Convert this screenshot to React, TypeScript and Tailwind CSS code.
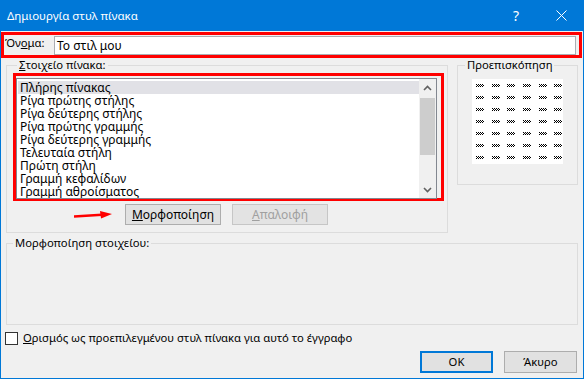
import React from "react";

const items = [
  "Πλήρης πίνακας",
  "Ρίγα πρώτης στήλης",
  "Ρίγα δεύτερης στήλης",
  "Ρίγα πρώτης γραμμής",
  "Ρίγα δεύτερης γραμμής",
  "Τελευταία στήλη",
  "Πρώτη στήλη",
  "Γραμμή κεφαλίδων",
  "Γραμμή αθροίσματος",
];

// little checkered "text" mark used in the preview table
function Mark() {
  const cells: [number, number][] = [];
  for (let y = 0; y < 3; y++) {
    for (let x = 0; x < 8; x++) {
      if ((x + y) % 2 === 0) cells.push([x, y]);
    }
  }
  return (
    <svg width="8" height="3" viewBox="0 0 8 3" shapeRendering="crispEdges">
      {cells.map(([x, y]) => (
        <rect key={`${x}-${y}`} x={x} y={y} width="1" height="1" fill="#000" />
      ))}
    </svg>
  );
}

function Chevron({ down }: { down?: boolean }) {
  return (
    <svg width="9" height="6" viewBox="0 0 9 6">
      <path
        d={down ? "M1 1 L4.5 4.5 L8 1" : "M1 5 L4.5 1.5 L8 5"}
        fill="none"
        stroke="#606060"
        strokeWidth="1.6"
      />
    </svg>
  );
}

export default function App() {
  return (
    <div className="w-[584px] h-[379px] flex flex-col bg-[#0078d7] font-['Segoe_UI','Noto_Sans',sans-serif] text-[11.25px] text-black overflow-hidden">
      {/* title bar */}
      <div className="h-[31px] flex items-center text-white shrink-0">
        <span className="pl-[7px] flex-1 text-[11.5px]">Δημιουργία στυλ πίνακα</span>
        <span className="w-[46px] text-center text-[14px] pl-[2px]">?</span>
        <span className="w-[46px] flex justify-center">
          <svg width="11" height="11" viewBox="0 0 11 11">
            <path d="M0.5 0.5 L10.5 10.5 M10.5 0.5 L0.5 10.5" stroke="#fff" strokeWidth="1" />
          </svg>
        </span>
      </div>

      {/* body */}
      <div className="flex-1 mx-[1px] mb-[1px] bg-[#f0f0f0] flex flex-col">
        {/* name */}
        <div className="mt-[1px] w-[581px] h-[26px] border-[3px] border-[#ff0000] flex">
          <span className="w-[50px] pl-[1px] leading-[15px]">
            Όν<span className="underline">ο</span>μα:
          </span>
          <div className="flex-1 mt-[1px] h-[19px] mr-[3px] bg-white border border-[#abadb3] pl-[2px] leading-[17px] text-[12px]">
            Το στιλ μου
          </div>
        </div>

        <div className="flex mx-[5px] gap-[9px]">
          {/* table element */}
          <fieldset className="w-[442px] border border-[#dcdcdc] pl-[6px] pb-[7px]">
            <legend className="ml-[4px] px-[2px] leading-[14px]">
              <span className="underline">Σ</span>τοιχείο πίνακα:
            </legend>
            <div className="mt-[1px] w-[431px] h-[128px] border-[3px] border-[#ff0000] pt-[2px]">
              <div className="w-[421px] h-[121px] border border-[#828790] bg-white flex">
                <div className="flex-1 pt-[2px] overflow-hidden text-[12px]">
                  {items.map((t, i) => (
                    <div
                      key={t}
                      className={`h-[13px] leading-[13px] ml-[1px] pl-[2px] whitespace-nowrap ${i === 0 ? "bg-[#e1e1e6]" : ""}`}
                    >
                      {t}
                    </div>
                  ))}
                </div>
                <div className="w-[17px] bg-[#f0f0f0] flex flex-col">
                  <div className="h-[17px] flex items-center justify-center">
                    <Chevron />
                  </div>
                  <div className="mt-[2px] mx-[1px] h-[57px] bg-[#cdcdcd]" />
                  <div className="flex-1" />
                  <div className="h-[17px] flex items-center justify-center">
                    <Chevron down />
                  </div>
                </div>
              </div>
            </div>
            <div className="mt-[3px] flex items-center text-[12px]">
              <svg width="38" height="8" viewBox="0 0 38 8" className="ml-[61px]">
                <path d="M0 5.5 L28 3.8" stroke="#ff0000" strokeWidth="2.4" />
                <path d="M26 0 L38 3 L27 7.5 Z" fill="#ff0000" />
              </svg>
              <button className="ml-[13px] w-[96px] h-[21px] bg-[#e1e1e1] border border-[#adadad] leading-[19px]">
                <span className="underline">Μ</span>ορφοποίηση
              </button>
              <button className="ml-[11px] w-[96px] h-[21px] bg-[#e3e3e3] border border-[#c6c6c6] text-[#a0a0a0] leading-[19px]">
                <span className="underline">Α</span>παλοιφή
              </button>
            </div>
          </fieldset>

          {/* preview */}
          <fieldset className="w-[121px] h-[127px] border border-[#dcdcdc]">
            <legend className="ml-[7px] px-[2px] leading-[14px]">Προεπισκόπηση</legend>
            <div className="mt-[7px] mx-auto w-[91px] h-[85px] bg-white pt-[5px] pl-[4px] grid grid-cols-6 gap-x-[7px] gap-y-[9px] content-start justify-start">
              {Array.from({ length: 42 }).map((_, i) => (
                <Mark key={i} />
              ))}
            </div>
          </fieldset>
        </div>

        {/* element formatting */}
        <fieldset className="mt-[3px] mx-[5px] h-[89px] border border-[#dcdcdc]">
          <legend className="ml-[6px] px-[2px] leading-[14px]">Μορφοποίηση στοιχείου:</legend>
        </fieldset>

        <label className="mt-[6px] ml-[4px] flex items-center h-[14px]">
          <span className="w-[13px] h-[13px] border border-[#333] bg-white" />
          <span className="ml-[5px]">
            <span className="underline">Ο</span>ρισμός ως προεπιλεγμένου στυλ πίνακα για αυτό το έγγραφο
          </span>
        </label>

        <div className="mt-[6px] flex justify-end gap-[11px] mr-[6px]">
          <button className="w-[73px] h-[22px] bg-[#e1e1e1] border-2 border-[#0078d7]">OK</button>
          <button className="w-[73px] h-[22px] bg-[#e1e1e1] border border-[#adadad]">Άκυρο</button>
        </div>
      </div>
    </div>
  );
}
